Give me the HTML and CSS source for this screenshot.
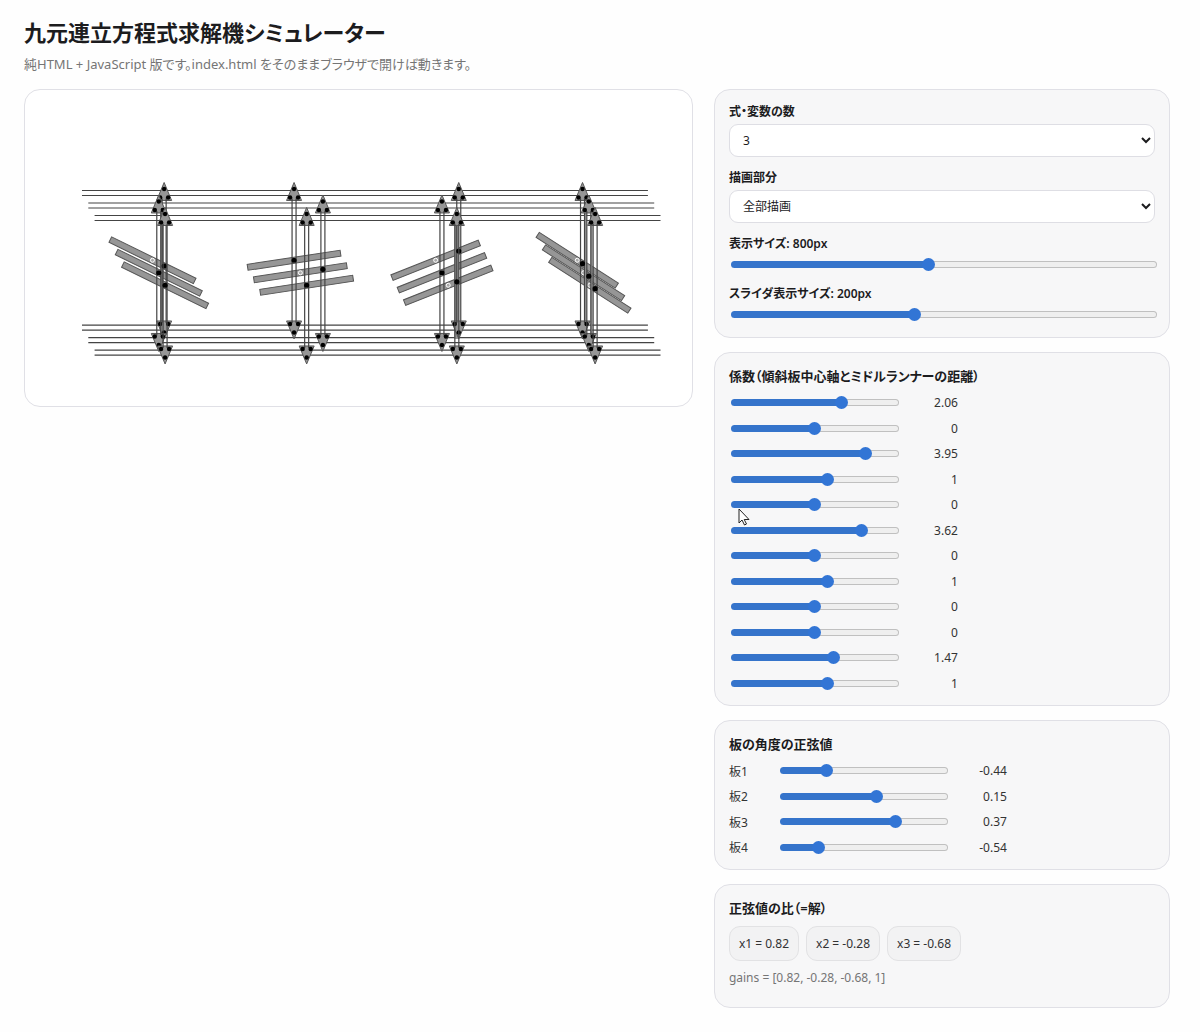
FILE: index.html
```html
<!DOCTYPE html>
<html lang="ja">
  <head>
    <meta charset="UTF-8" />
    <meta name="viewport" content="width=device-width, initial-scale=1.0" />
    <title>九元連立方程式求解機シミュレーター</title>
    <link rel="stylesheet" href="styles.css">
  </head>
  <body>
    <header>
      <h1>九元連立方程式求解機シミュレーター</h1>
      <p class="lead">純HTML + JavaScript 版です。index.html をそのままブラウザで開けば動きます。</p>
    </header>

    <main class="layout">
      <section class="stage">
        <svg id="machine" viewBox="0 0 667 316" role="img" aria-label="求解機"></svg>
      </section>

      <div class="side">
        <section class="card">
          <div class="field">
            <label for="count">式・変数の数</label>
            <select id="count">
              <option>2</option>
              <option selected>3</option>
              <option>4</option>
              <option>9</option>
            </select>
          </div>
          <div class="field">
            <label for="part">描画部分</label>
            <select id="part">
              <option selected>全部描画</option>
            </select>
          </div>
          <div class="field">
            <label for="size">表示サイズ: 800px</label>
            <input type="range" id="size" min="200" max="1500" value="800" />
          </div>
          <div class="field">
            <label for="sliderSize">スライダ表示サイズ: 200px</label>
            <input type="range" id="sliderSize" min="80" max="360" value="200" />
          </div>
        </section>

        <section class="card">
          <h2>係数（傾斜板中心軸とミドルランナーの距離）</h2>
          <div class="rows" id="coefs"></div>
        </section>

        <section class="card">
          <h2>板の角度の正弦値</h2>
          <div class="rows" id="sines"></div>
        </section>

        <section class="card">
          <h2>正弦値の比（=解）</h2>
          <div class="chips">
            <span class="chip">x1 = 0.82</span>
            <span class="chip">x2 = -0.28</span>
            <span class="chip">x3 = -0.68</span>
          </div>
          <p class="gains">gains = [0.82, -0.28, -0.68, 1]</p>
        </section>
      </div>
    </main>

    <script src="script.js"></script>
  </body>
</html>
```
FILE: styles.css
```css
* {
  box-sizing: border-box;
}

body {
  margin: 0;
  padding: 18px 30px 24px 24px;
  background: #fefefe;
  color: #1c1c1e;
  font-family: "Noto Sans", "Noto Sans CJK JP", sans-serif;
  font-size: 12px;
  font-feature-settings: "palt";
}

h1,
h2,
p {
  margin: 0;
}

h1 {
  font-size: 22px;
  line-height: 28px;
  font-weight: 600;
}

.lead {
  margin-top: 9px;
  font-size: 13px;
  line-height: 18px;
  color: #757575;
}

.layout {
  display: grid;
  grid-template-columns: 22fr 15fr;
  gap: 21px;
  align-items: start;
  margin-top: 16px;
}

.stage,
.card {
  border: 1px solid #e0e0e6;
  border-radius: 16px;
}

.stage {
  background: #fff;
}

.stage svg {
  display: block;
  width: 100%;
}

.side {
  display: grid;
  gap: 14px;
}

.card {
  padding: 14px 14px 9px;
  background: #f7f7f8;
}

/* settings */
.field {
  margin-bottom: 13px;
}

.field:last-child {
  margin-bottom: 5px;
}

.field label {
  display: block;
  margin-bottom: 4px;
  line-height: 16px;
  font-weight: 600;
}

select {
  display: block;
  width: 100%;
  height: 33px;
  padding: 0 0 0 9px;
  border: 1px solid #dedee4;
  border-radius: 9px;
  background-color: #fff;
  color: #1c1c1e;
  font: inherit;
}

/* sliders */
input[type="range"] {
  -webkit-appearance: none;
  appearance: none;
  display: block;
  width: 100%;
  height: 17px;
  margin: 0 0 0 2px;
  background: none;
}

input[type="range"]::-webkit-slider-runnable-track {
  height: 7px;
  border: 1px solid transparent;
  border-radius: 4px;
  background:
    linear-gradient(#3574cb, #3574cb) 0 0 / var(--fill) 100% no-repeat border-box,
    linear-gradient(#efefef, #efefef) padding-box,
    linear-gradient(#c0c0c0, #c0c0c0) border-box;
}

input[type="range"]::-webkit-slider-thumb {
  -webkit-appearance: none;
  width: 13px;
  height: 13px;
  margin-top: -4px;
  border-radius: 50%;
  background: #3275d5;
}

h2 {
  margin-bottom: 5px;
  font-size: 13px;
  line-height: 18px;
  font-weight: 600;
}

.rows {
  display: grid;
  grid-auto-rows: 25px 26px;
}

.row {
  position: relative;
  display: flex;
  align-items: center;
}

.row label {
  width: 49px;
}

.row label,
.row output,
.chip {
  color: #333;
}

.row input[type="range"] {
  width: 168px;
}

.row output {
  width: 59px;
  text-align: right;
}

.cursor {
  position: absolute;
  left: 9px;
  top: 16px;
  width: 12px;
  height: 18px;
  z-index: 1;
}

/* result */
.chips {
  display: flex;
  gap: 7px;
  padding-top: 4px;
}

.chip {
  padding: 8px 9px;
  border: 1px solid #e2e2e4;
  border-radius: 11px;
  background: #f2f2f3;
  line-height: 17px;
}

.gains {
  margin: 8px 0 11px;
  line-height: 18px;
  color: #757575;
}

/* machine */
.wire,
.rope {
  stroke: #444;
  stroke-width: 1.2;
}

.plate {
  fill: #969696;
  stroke: #555;
  stroke-width: 1;
}

.arrow {
  fill: #969696;
  stroke: #555;
  stroke-width: 1;
}

.belt {
  fill: #969696;
}

.pivot {
  fill: #aaa;
  stroke: #fff;
  stroke-width: 1;
}

.pin {
  fill: #000;
}
```
FILE: script.js
```js
const coefs = [
  [2.06, 0, 3.95, 1],
  [0, 3.62, 0, 1],
  [0, 0, 1.47, 1],
];
const sines = [-0.44, 0.15, 0.37, -0.54];

function fillTrack(input) {
  const t = (input.value - input.min) / (input.max - input.min);
  input.style.setProperty("--fill", `calc(${t * 100}% + ${6 - 13 * t}px)`);
}

// slider rows
document.getElementById("coefs").innerHTML = coefs
  .flat()
  .map(
    (v, i) => `<div class="row">
      <input type="range" id="c${i}" aria-label="係数${i + 1}" min="-6" max="6" step="0.01" value="${v}" />
      <output for="c${i}">${v}</output>
    </div>`
  )
  .join("");

document.getElementById("sines").innerHTML = sines
  .map(
    (v, i) => `<div class="row">
      <label for="s${i}">板${i + 1}</label>
      <input type="range" id="s${i}" min="-0.9" max="0.9" step="0.01" value="${v}" />
      <output for="s${i}">${v}</output>
    </div>`
  )
  .join("");

document.querySelectorAll("#coefs .row")[4].insertAdjacentHTML(
  "beforeend",
  `<svg class="cursor" viewBox="0 0 12 18"><path d="M1 1v14l3-3 2.5 5 2-1-2.3-4.500H11z" fill="#fff" stroke="#222"/></svg>`
);

document.querySelectorAll("input[type=range]").forEach((input) => {
  fillTrack(input);
  input.addEventListener("input", () => {
    fillTrack(input);
    const out = input.parentElement.querySelector("output");
    if (out) out.textContent = input.value;
  });
});

// machine: three layers, each shifted right and down
const DX = 6.3;
const DY = 12.5;
const UNIT = 6.3;
let svg = "";

const line = (cls, x1, y1, x2, y2) =>
  `<line class="${cls}" x1="${x1}" y1="${y1}" x2="${x2}" y2="${y2}"/>`;
const dot = (cls, x, y, r) => `<circle class="${cls}" cx="${x}" cy="${y}" r="${r}"/>`;

for (let k = 0; k < 3; k++) {
  [100.5, 105.5, 235.2, 240.2].forEach((y) => {
    svg += line("wire", 57 + DX * k, y + DY * k, 623 + DX * k, y + DY * k);
  });
}

for (let k = 0; k < 3; k++) {
  sines.forEach((s, i) => {
    const x = 127.5 + 141.6 * i + DX * k;
    const y = 170.3 + DY * k;
    const deg = (-Math.asin(s) * 180) / Math.PI;
    svg += `<rect class="plate" x="${x - 47}" y="${y - 3}" width="94" height="6" transform="rotate(${deg} ${x} ${y})"/>`;
    svg += dot("pivot", x, y, 2);
  });
}

// belts that lie over each other
[
  [135.6, 118, 2.6],
  [429.5, 130, 4.5],
  [560, 118, 1.6],
  [566, 130, 1.6],
].forEach(([x, y, w]) => {
  svg += `<rect class="belt" x="${x}" y="${y}" width="${w}" height="${249 - y}"/>`;
});

for (let k = 0; k < 3; k++) {
  sines.forEach((s, i) => {
    const c = coefs[k][i] * UNIT;
    const x = 127.5 + 141.6 * i + DX * k + c * Math.sqrt(1 - s * s);
    const y = 170.3 + DY * k - c * s;
    const top = 92.5 + DY * k;
    const bottom = 249 + DY * k;
    svg += `<path class="arrow" d="M${x} ${top}l7.500 18h-15z"/>`;
    svg += `<path class="arrow" d="M${x} ${bottom}l7.500 -18h-15z"/>`;
    svg += line("rope", x - 2, top + 16, x - 2, bottom - 16);
    svg += line("rope", x + 2, top + 16, x + 2, bottom - 16);
    svg += dot("pin", x, top + 6.5, 2.2) + dot("pin", x - 4, top + 15, 2.2) + dot("pin", x + 4, top + 15, 2.2);
    svg += dot("pin", x, bottom - 6.5, 2.2) + dot("pin", x - 4, bottom - 15, 2.2) + dot("pin", x + 4, bottom - 15, 2.2);
    svg += dot("pin", x, y, 2.6);
  });
}

document.getElementById("machine").innerHTML = svg;
```
